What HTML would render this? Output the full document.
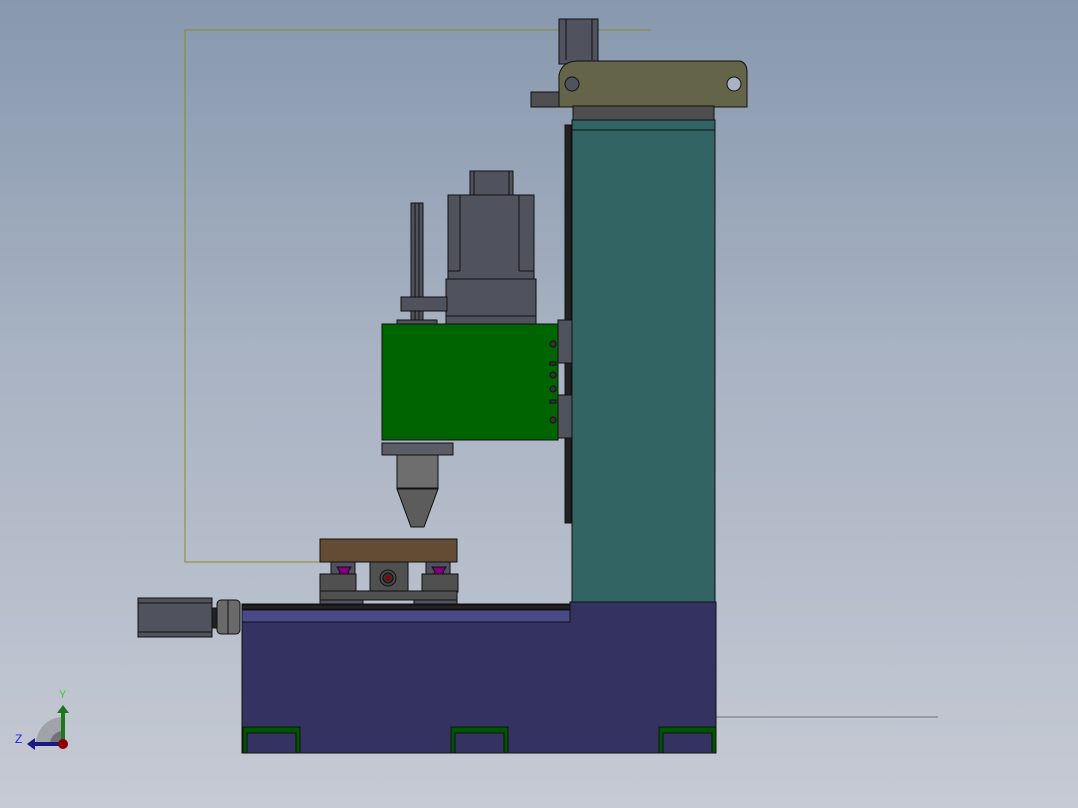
<!DOCTYPE html>
<html><head><meta charset="utf-8"><style>
html,body{margin:0;padding:0}
body{width:1078px;height:808px;overflow:hidden;background:linear-gradient(#8798ae 0%,#a9b3c3 45%,#c6cad4 100%);}
svg{position:absolute;left:0;top:0}
</style></head><body>
<svg width="1078" height="808" viewBox="0 0 1078 808" stroke="#111" stroke-width="1">
<!-- sketch lines -->
<polyline points="651,30 185,30 185,562 320,562" fill="none" stroke="#8a8a20"/>
<line x1="716" y1="717" x2="938" y2="717" stroke="#6a6e78"/>
<!-- top motor -->
<rect x="559" y="19" width="39" height="45" fill="#50525e"/>
<line x1="566" y1="19" x2="566" y2="60"/><line x1="592" y1="19" x2="592" y2="60"/>
<rect x="531" y="92" width="30" height="15" fill="#4e4e50"/>
<!-- bracket -->
<path d="M559,107 L559,75 Q562,61 578,61 L740,61 Q747,63 747,72 L747,107 Z" fill="#646448"/>
<circle cx="572" cy="84" r="7" fill="#50525e"/>
<circle cx="734" cy="84" r="7" fill="#a9b2c2"/>
<rect x="573" y="106" width="141" height="14" fill="#4e4e50"/>
<!-- column -->
<rect x="572" y="120" width="143" height="484" fill="#326464"/>
<line x1="572" y1="130" x2="715" y2="130"/>
<rect x="565" y="125" width="6" height="398" fill="#222" />
<!-- head motor -->
<rect x="470" y="171" width="43" height="25" fill="#50525e"/>
<line x1="474" y1="171" x2="474" y2="195"/><line x1="509" y1="171" x2="509" y2="195"/>
<rect x="448" y="195" width="86" height="85" fill="#50525e"/>
<line x1="460" y1="195" x2="460" y2="271"/><line x1="519" y1="195" x2="519" y2="271"/>
<line x1="448" y1="271" x2="460" y2="271"/><line x1="519" y1="271" x2="534" y2="271"/>
<rect x="446" y="279" width="90" height="45" fill="#50525e"/>
<line x1="446" y1="316" x2="536" y2="316"/>
<rect x="411" y="203" width="12" height="117" fill="#50525e"/>
<line x1="415" y1="203" x2="415" y2="320"/><line x1="419" y1="203" x2="419" y2="320"/>
<rect x="401" y="297" width="46" height="14" fill="#50525e"/>
<rect x="397" y="320" width="40" height="4" fill="#50525e"/>
<!-- green box -->
<rect x="382" y="324" width="176" height="116" fill="#006400"/>
<g fill="#333" stroke="#111">
<circle cx="553" cy="344" r="3"/><rect x="550" y="362" width="6" height="3"/><circle cx="553" cy="375" r="3"/><circle cx="553" cy="389" r="3"/><rect x="550" y="400" width="6" height="3"/><circle cx="553" cy="420" r="3"/></g>
<rect x="558" y="320" width="14" height="43" fill="#50525e"/>
<rect x="558" y="395" width="14" height="43" fill="#50525e"/>
<!-- nozzle -->
<rect x="382" y="443" width="71" height="12" fill="#5a5c68"/>
<rect x="397" y="455" width="41" height="33" fill="#6e6e6e"/>
<polygon points="397,489 438,489 424,527 411,527" fill="#5c5c5c"/>
<!-- table -->
<rect x="320" y="539" width="137" height="23" fill="#644b33"/>
<rect x="331" y="562" width="24" height="14" fill="#50525e"/>
<rect x="426" y="562" width="24" height="14" fill="#50525e"/>
<path d="M337,567 L351,567 L348,572 L351,577 L337,577 L340,572Z" fill="#800080"/>
<path d="M432,567 L446,567 L443,572 L446,577 L432,577 L435,572Z" fill="#800080"/>
<rect x="320" y="574" width="36" height="18" fill="#505050"/>
<rect x="422" y="574" width="36" height="18" fill="#505050"/>
<rect x="370" y="562" width="38" height="30" fill="#505050"/>
<circle cx="388" cy="578" r="8" fill="#4a4a4a"/><circle cx="388" cy="578" r="5" fill="#333"/><circle cx="388" cy="578" r="2.5" fill="#8b0000" stroke="none"/>
<rect x="320" y="591" width="137" height="9" fill="#505050"/>
<rect x="320" y="600" width="43" height="10" fill="#50525e"/>
<rect x="414" y="600" width="43" height="10" fill="#50525e"/>
<!-- base -->
<path d="M242,604 L570,604 L570,602 L716,602 L716,753 L242,753 Z" fill="#333260"/>
<rect x="242" y="605" width="328" height="4" fill="#222"/>
<rect x="242" y="610" width="328" height="12" fill="#4a4a8a"/>
<g fill="#005500" stroke="#111">
<path d="M243,753 L243,727 L300,727 L300,753 L296,753 L296,733 L247,733 L247,753Z"/>
<path d="M451,753 L451,727 L508,727 L508,753 L504,753 L504,733 L455,733 L455,753Z"/>
<path d="M659,753 L659,727 L716,727 L716,753 L712,753 L712,733 L663,733 L663,753Z"/>
</g>
<!-- left motor -->
<rect x="138" y="598" width="74" height="39" fill="#50525e"/>
<line x1="138" y1="603" x2="212" y2="603"/><line x1="138" y1="632" x2="212" y2="632"/>
<rect x="212" y="608" width="5" height="20" fill="#222"/>
<rect x="217" y="600" width="23" height="34" fill="#6a6a6a" rx="4"/>
<line x1="228" y1="600" x2="228" y2="634"/>
<!-- triad -->
<path d="M36,744 A27,27 0 0 1 63,717 L63,744 Z" fill="#a0a3aa" stroke="none"/>
<path d="M50,744 A13,13 0 0 1 63,731 L63,744 Z" fill="#707378" stroke="none"/>
<rect x="61" y="712" width="4" height="30" fill="#1a7a1a" stroke="none"/>
<polygon points="57,713 63,705 69,713" fill="#1a7a1a" stroke="none"/>
<rect x="34" y="742" width="28" height="4" fill="#1a1a80" stroke="none"/>
<polygon points="35,738 27,744 35,750" fill="#1a1a80" stroke="none"/>
<circle cx="63" cy="744" r="5" fill="#8b0000" stroke="none"/>
<text x="59" y="698" font-family="Liberation Sans" font-size="11" fill="#22dd22" stroke="none">Y</text>
<text x="15" y="743" font-family="Liberation Sans" font-size="12" fill="#2222ee" stroke="none">Z</text>
</svg>
</body></html>
